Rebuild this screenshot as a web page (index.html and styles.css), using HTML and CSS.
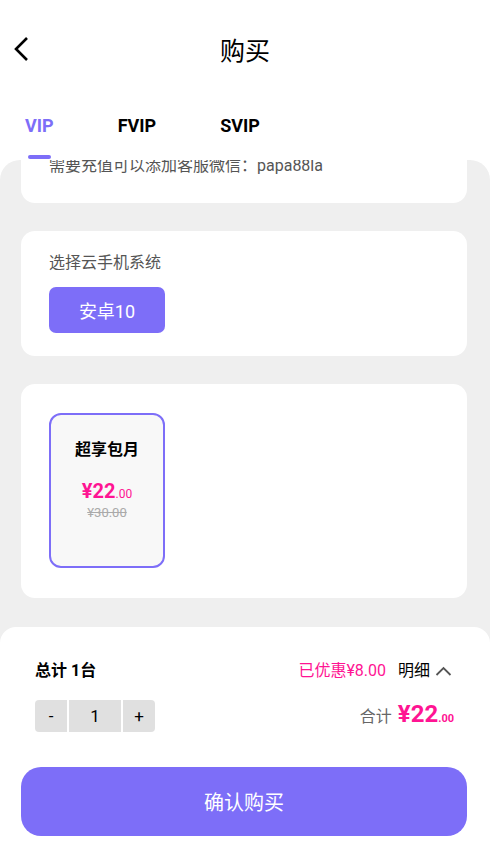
FILE: index.html
```html
<!DOCTYPE html>
<html lang="zh">
<head>
<meta charset="UTF-8">
<title>购买</title>
<link rel="stylesheet" href="styles.css">
</head>
<body>
<div class="page">
  <div class="header">
    <svg class="back" width="18" height="26" viewBox="0 0 18 26"><path d="M14 2 L3 13 L14 24" fill="none" stroke="#000" stroke-width="2.6"/></svg>
    <div class="title">购买</div>
  </div>

  <div class="tabs">
    <div class="tab active"><span>VIP</span><i class="bar"></i></div>
    <div class="tab"><span>FVIP</span></div>
    <div class="tab"><span>SVIP</span></div>
  </div>

  <div class="scroll">
    <div class="scroll-inner">
      <div class="card card-notice">
        <p class="muted">需要充值可以添加客服微信：papa88la</p>
      </div>

      <div class="card">
        <p class="muted">选择云手机系统</p>
        <button class="sys-btn">安卓10</button>
      </div>

      <div class="card card-plans">
        <div class="plan selected">
          <div class="plan-name">超享包月</div>
          <div class="plan-price">¥22<small>.00</small></div>
          <div class="plan-old">¥30.00</div>
        </div>
      </div>
    </div>
  </div>

  <div class="footer">
    <div class="sheet">
      <div class="row">
        <div class="total">总计 1台</div>
        <div class="right">
          <span class="saved">已优惠¥8.00</span>
          <span class="detail">明细</span>
          <svg width="17" height="10" viewBox="0 0 17 10"><path d="M1.5 9 L8.5 2 L15.5 9" fill="none" stroke="#555" stroke-width="1.8"/></svg>
        </div>
      </div>
      <div class="row row-qty">
        <div class="stepper">
          <span class="step">-</span>
          <span class="qty">1</span>
          <span class="step">+</span>
        </div>
        <div class="sum">
          <span class="sum-label">合计</span>
          <span class="sum-price">¥22<small>.00</small></span>
        </div>
      </div>
      <button class="confirm">确认购买</button>
    </div>
  </div>
</div>
</body>
</html>
```

FILE: styles.css
```css
body {
  margin: 0;
  font-family: Roboto, "Noto Sans CJK SC", sans-serif;
  color: #000;
  background: #fff;
}
p { margin: 0; }
.page {
  height: 854px;
  display: flex;
  flex-direction: column;
  overflow: hidden;
}
.header {
  height: 98px;
  display: flex;
  align-items: center;
  position: relative;
}
.back {
  position: absolute;
  left: 13px;
  top: 36px;
}
.title {
  flex: 1;
  text-align: center;
  font-size: 25px;
}
.tabs {
  height: 62px;
  display: flex;
  gap: 64px;
  padding-left: 25px;
}
.tab {
  display: flex;
  flex-direction: column;
  align-items: center;
}
.tab span {
  margin-top: 18px;
  line-height: 20px;
  font-size: 18px;
  font-weight: bold;
}
.tab.active span { color: #7d6ef8; }
.bar {
  margin-top: 19px;
  width: 23px;
  height: 4px;
  border-radius: 2px;
  background: #7d6ef8;
  position: relative;
  z-index: 2;
}
.scroll {
  flex: 1;
  overflow: hidden;
  background: #efefef;
  border-radius: 20px 20px 0 0;
  padding: 0 23px 0 21px;
}
.scroll-inner { margin-top: -27px; }
.card {
  background: #fff;
  border-radius: 14px;
  padding: 22px 28px 23px;
  margin-bottom: 28px;
}
.card-notice { padding: 23px 28px 27px; }
.muted {
  font-size: 16px;
  line-height: 20px;
  color: #555;
}
.sys-btn {
  margin-top: 14px;
  width: 116px;
  height: 46px;
  border: none;
  border-radius: 7px;
  background: #7d6ef8;
  color: #fff;
  font-family: inherit;
  font-size: 18px;
  display: block;
}
.card-plans {
  padding: 29px 28px 30px;
  margin-bottom: 0;
}
.plan {
  width: 116px;
  height: 155px;
  box-sizing: border-box;
  border: 2px solid #7d6ef8;
  border-radius: 12px;
  background: #f8f8f8;
  display: flex;
  flex-direction: column;
  align-items: center;
  padding-top: 25px;
}
.plan-name {
  font-size: 16px;
  font-weight: bold;
  line-height: 20px;
}
.plan-price {
  margin-top: 19px;
  font-size: 20px;
  font-weight: bold;
  line-height: 24px;
  color: #ff1493;
}
.plan-price small {
  font-size: 12px;
  font-weight: normal;
}
.plan-old {
  font-size: 13px;
  line-height: 14px;
  color: #aaa;
  text-decoration: line-through;
}
.footer {
  height: 227px;
  background: #efefef;
}
.sheet {
  height: 100%;
  box-sizing: border-box;
  background: #fff;
  border-radius: 16px 16px 0 0;
  padding: 33px 0 0;
}
.row {
  display: flex;
  justify-content: space-between;
  align-items: center;
  padding: 0 38px 0 35px;
  line-height: 22px;
}
.total {
  font-size: 16px;
  font-weight: bold;
}
.right {
  display: flex;
  align-items: center;
  font-size: 16px;
}
.saved { color: #ff1493; }
.detail { margin-left: 12px; margin-right: 5px; }
.row-qty {
  margin-top: 18px;
  padding-right: 36px;
}
.stepper {
  display: flex;
  gap: 2px;
  height: 32px;
  border-radius: 4px;
  overflow: hidden;
  font-size: 17px;
}
.step, .qty {
  background: #e0e0e0;
  display: flex;
  align-items: center;
  justify-content: center;
  width: 32px;
}
.qty { width: 52px; }
.sum {
  display: flex;
  align-items: baseline;
}
.sum-label {
  font-size: 16px;
  color: #666;
  margin-right: 6px;
}
.sum-price {
  font-size: 24px;
  font-weight: bold;
  color: #ff1493;
}
.sum-price small {
  font-size: 11px;
}
.confirm {
  display: block;
  margin: 35px 23px 0 21px;
  width: calc(100% - 44px);
  height: 69px;
  border: none;
  border-radius: 20px;
  background: #7d6ef8;
  color: #fff;
  font-family: inherit;
  font-size: 20px;
}
```
